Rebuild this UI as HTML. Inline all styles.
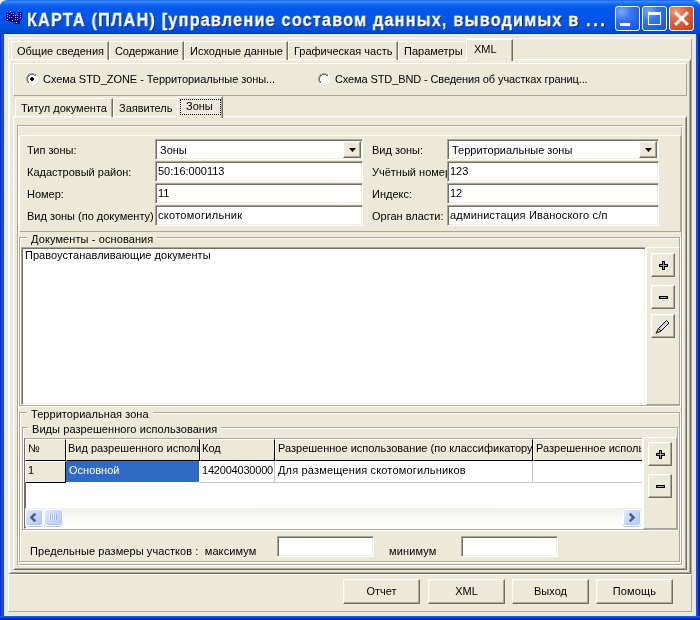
<!DOCTYPE html>
<html><head><meta charset="utf-8">
<style>
*{margin:0;padding:0;box-sizing:border-box}
html,body{width:700px;height:620px;overflow:hidden;background:#eef0f8}
body{position:relative;font-family:"Liberation Sans",sans-serif;font-size:11px;color:#000}
.a{position:absolute}
.t{position:absolute;will-change:transform;white-space:nowrap;line-height:13px;font-size:11px}
.win{position:absolute;left:0;top:0;width:700px;height:620px;border-radius:7px 7px 0 0;overflow:hidden;
 background:linear-gradient(to right,#0019cf 0,#0831d9 1px,#166aee 2px,#1444b8 3px,#1444b8 4px,transparent 4px,transparent 696px,#1444b8 696px,#166aee 697px,#0831d9 698px,#0019cf 699px)}
.title{position:absolute;left:0;top:0;width:700px;height:34px;border-radius:7px 7px 0 0;
 background:linear-gradient(to bottom,#0a4fd8 0,#3d8fff 1px,#2f80fb 2px,#0f64ef 5px,#0058ea 9px,#0055e5 22px,#0050dc 29px,#0046cc 32px,#0040c0 34px)}
.client{position:absolute;left:4px;top:34px;width:692px;height:582px;background:#ece9d8;border-left:1px solid #dfe9fb;border-right:1px solid #dfe9fb}
.bottomframe{position:absolute;left:0;top:616px;width:700px;height:4px;background:linear-gradient(to bottom,#1444b8 0,#166aee 1px,#0831d9 2px,#0019cf 3px)}
.ttl{position:absolute;will-change:transform;left:26.5px;top:7.9px;font-weight:bold;font-size:18px;line-height:24px;color:#fff;letter-spacing:1.35px;transform:scaleX(0.9);transform-origin:0 0;-webkit-text-stroke:0.3px #fff;text-shadow:1px 1px 0 #0a1883;white-space:nowrap}
.tb{position:absolute;top:6px;width:25px;height:25px;border:1px solid #fff;border-radius:3px}
.tbb{background:radial-gradient(circle at 25% 20%,#7aa7ff 0,#3b77f5 35%,#1e5de8 75%,#1a4fd6 100%)}
.tbr{background:radial-gradient(circle at 25% 20%,#f29a7a 0,#e0603a 40%,#d14a22 80%,#c23f1a 100%)}
/* bevels */
.raised{border-top:1px solid #fff;border-left:1px solid #fff;border-right:1px solid #aca899;border-bottom:1px solid #aca899}
.lowered{border-top:1px solid #aca899;border-left:1px solid #aca899;border-right:1px solid #fff;border-bottom:1px solid #fff}
.etched{border-top:1px solid #aca899;border-left:1px solid #aca899;border-right:1px solid #fff;border-bottom:1px solid #fff;box-shadow:inset 1px 1px 0 #fff,inset -1px -1px 0 #aca899}
.sheet{border-top:1px solid #fff;border-left:1px solid #fff;border-right:1px solid #716f64;border-bottom:1px solid #716f64;box-shadow:inset 1px 1px 0 #f1efe2,inset -1px -1px 0 #aca899}
.edit{position:absolute;background:#fff;border-top:1px solid #aca899;border-left:1px solid #aca899;border-right:1px solid #fff;border-bottom:1px solid #fff;box-shadow:inset 1px 1px 0 #716f64,inset -1px -1px 0 #f1efe2}
.btn{position:absolute;background:#ece9d8;border-top:1px solid #fff;border-left:1px solid #fff;border-right:1px solid #716f64;border-bottom:1px solid #716f64;box-shadow:inset -1px -1px 0 #aca899,inset 1px 1px 0 #f1efe2}
.tab{position:absolute;height:19px;border-top:1px solid #fff;border-left:1px solid #fff;border-right:1px solid #716f64;box-shadow:inset -1px 0 0 #aca899}
.gb{position:absolute;border:1px solid #aca899;box-shadow:inset 1px 1px 0 #fff,1px 1px 0 #fff}
.gbt{position:absolute;will-change:transform;background:#ece9d8;padding:0 4px;white-space:nowrap;line-height:13px}
.sbb{position:absolute;height:17px;border:1px solid #fdfdff;border-radius:3px;background:linear-gradient(135deg,#e1e9fd 0%,#cbd9fc 45%,#b7cbf8 100%);box-shadow:inset -1px -1px 0 #b0c4f0,0 1px 0 #b9c4dc}
.hdr{position:absolute;top:439px;height:22px;background:#ece9d8;border-top:1px solid #fff;border-left:1px solid #fff;border-right:1px solid #000;border-bottom:1px solid #000}
</style></head><body>
<div class="win"></div>
<div class="title"></div>
<div class="client"></div>
<div class="bottomframe"></div>

<!-- title bar -->
<svg class="a" style="left:4px;top:9px" width="22" height="18" viewBox="0 0 22 18" shape-rendering="crispEdges">
 <g fill="#0c0c8c">
 <rect x="2" y="4" width="4" height="8"/><rect x="6" y="3" width="5" height="10"/><rect x="11" y="6" width="5" height="9"/><rect x="14" y="3" width="4" height="8"/>
 </g>
 <g fill="#b8a8ff">
 <rect x="3" y="5" width="1" height="1"/><rect x="3" y="7" width="1" height="1"/><rect x="5" y="6" width="1" height="1"/><rect x="5" y="8" width="1" height="1"/>
 <rect x="7" y="4" width="1" height="1"/><rect x="9" y="4" width="1" height="1"/><rect x="7" y="8" width="1" height="1"/><rect x="9" y="6" width="1" height="1"/>
 <rect x="13" y="6" width="1" height="1"/><rect x="11" y="8" width="1" height="1"/><rect x="13" y="8" width="1" height="1"/><rect x="11" y="10" width="1" height="1"/><rect x="13" y="10" width="1" height="1"/>
 <rect x="16" y="4" width="1" height="1"/><rect x="16" y="6" width="1" height="1"/><rect x="16" y="8" width="1" height="1"/>
 </g>
 <g fill="#9ff0ff"><rect x="6" y="2" width="1" height="1"/><rect x="11" y="6" width="1" height="1"/></g>
 <g fill="#ffffff"><rect x="3" y="10" width="1" height="1"/><rect x="8" y="11" width="1" height="1"/><rect x="12" y="13" width="1" height="1"/></g>
</svg>
<div class="ttl">КАРТА (ПЛАН) [управление составом данных, выводимых в <span style="letter-spacing:2.9px;margin-left:1px">...</span></div>
<div class="tb tbb" style="left:615px"><div class="a" style="left:4px;top:16px;width:10px;height:3px;background:#fff"></div></div>
<div class="tb tbb" style="left:642px"><div class="a" style="left:5px;top:5px;width:13px;height:13px;border:1px solid #fff;border-top-width:3px"></div></div>
<div class="tb tbr" style="left:669px">
 <svg class="a" style="left:0;top:0" width="23" height="23" viewBox="0 0 23 23"><path d="M5.2 5.2 L17.8 17.8 M17.8 5.2 L5.2 17.8" stroke="#fff" stroke-width="3"/></svg>
</div>

<!-- outer page control -->
<div class="a raised" style="left:8px;top:38px;width:684px;height:536px"></div>
<div class="a sheet" style="left:9px;top:59px;width:682px;height:515px"></div>
<!-- top tabs -->
<div class="tab" style="left:11px;top:41px;width:98px"></div>
<div class="tab" style="left:109px;top:41px;width:75px"></div>
<div class="tab" style="left:184px;top:41px;width:104px"></div>
<div class="tab" style="left:288px;top:41px;width:110px"></div>
<div class="tab" style="left:398px;top:41px;width:70px"></div>
<div class="a" style="left:466px;top:39px;width:47px;height:22px;background:#ece9d8;border-top:1px solid #fff;border-left:1px solid #fff;border-right:1px solid #716f64;box-shadow:inset -1px 0 0 #aca899"></div>
<div class="t" style="left:17px;top:45px">Общие сведения</div>
<div class="t" style="left:115px;top:45px;letter-spacing:-0.08px">Содержание</div>
<div class="t" style="left:190px;top:45px">Исходные данные</div>
<div class="t" style="left:294px;top:45px">Графическая часть</div>
<div class="t" style="left:404px;top:45px">Параметры</div>
<div class="t" style="left:474px;top:43px">XML</div>

<!-- radio panel -->
<div class="a raised" style="left:13px;top:63px;width:674px;height:33px"></div>
<svg class="a" style="left:26px;top:73px" width="12" height="12" viewBox="0 0 12 12" shape-rendering="crispEdges"><path d="M4 0h4v1h-4zM2 1h2v1h-2zM8 1h2v1h-2zM1 2h1v1h-1zM1 3h1v1h-1zM0 4h1v1h-1zM0 5h1v1h-1zM0 6h1v1h-1zM0 7h1v1h-1zM1 8h1v1h-1zM1 9h1v1h-1z" fill="#aca899"/><path d="M4 1h4v1h-4zM2 2h2v1h-2zM8 2h2v1h-2zM2 3h1v1h-1zM1 4h1v1h-1zM1 5h1v1h-1zM1 6h1v1h-1zM1 7h1v1h-1zM2 8h1v1h-1zM2 9h1v1h-1z" fill="#716f64"/><path d="M4 2h4v1h-4zM10 2h1v1h-1zM3 3h6v1h-6zM10 3h1v1h-1zM2 4h3v1h-3zM7 4h3v1h-3zM11 4h1v1h-1zM2 5h2v1h-2zM8 5h2v1h-2zM11 5h1v1h-1zM2 6h2v1h-2zM8 6h2v1h-2zM11 6h1v1h-1zM2 7h3v1h-3zM7 7h3v1h-3zM11 7h1v1h-1zM3 8h6v1h-6zM10 8h1v1h-1zM4 9h4v1h-4zM10 9h1v1h-1zM2 10h2v1h-2zM8 10h2v1h-2zM4 11h4v1h-4z" fill="#ffffff"/><path d="M9 3h1v1h-1zM10 4h1v1h-1zM10 5h1v1h-1zM10 6h1v1h-1zM10 7h1v1h-1zM9 8h1v1h-1zM3 9h1v1h-1zM8 9h2v1h-2zM4 10h4v1h-4z" fill="#f1efe2"/><path d="M5 4h2v1h-2zM4 5h4v1h-4zM4 6h4v1h-4zM5 7h2v1h-2z" fill="#000000"/></svg>
<div class="t" style="left:43px;top:73px;letter-spacing:-0.05px">Схема STD_ZONE - Территориальные зоны...</div>
<svg class="a" style="left:318px;top:73px" width="12" height="12" viewBox="0 0 12 12" shape-rendering="crispEdges"><path d="M4 0h4v1h-4zM2 1h2v1h-2zM8 1h2v1h-2zM1 2h1v1h-1zM1 3h1v1h-1zM0 4h1v1h-1zM0 5h1v1h-1zM0 6h1v1h-1zM0 7h1v1h-1zM1 8h1v1h-1zM1 9h1v1h-1z" fill="#aca899"/><path d="M4 1h4v1h-4zM2 2h2v1h-2zM8 2h2v1h-2zM2 3h1v1h-1zM1 4h1v1h-1zM1 5h1v1h-1zM1 6h1v1h-1zM1 7h1v1h-1zM2 8h1v1h-1zM2 9h1v1h-1z" fill="#716f64"/><path d="M4 2h4v1h-4zM10 2h1v1h-1zM3 3h6v1h-6zM10 3h1v1h-1zM2 4h8v1h-8zM11 4h1v1h-1zM2 5h8v1h-8zM11 5h1v1h-1zM2 6h8v1h-8zM11 6h1v1h-1zM2 7h8v1h-8zM11 7h1v1h-1zM3 8h6v1h-6zM10 8h1v1h-1zM4 9h4v1h-4zM10 9h1v1h-1zM2 10h2v1h-2zM8 10h2v1h-2zM4 11h4v1h-4z" fill="#ffffff"/><path d="M9 3h1v1h-1zM10 4h1v1h-1zM10 5h1v1h-1zM10 6h1v1h-1zM10 7h1v1h-1zM9 8h1v1h-1zM3 9h1v1h-1zM8 9h2v1h-2zM4 10h4v1h-4z" fill="#f1efe2"/></svg>
<div class="t" style="left:335px;top:73px;letter-spacing:-0.11px">Схема STD_BND - Сведения об участках границ...</div>

<!-- inner page control -->
<div class="a sheet" style="left:13px;top:116px;width:674px;height:454px"></div>
<div class="tab" style="left:15px;top:98px;width:98px"></div>
<div class="tab" style="left:113px;top:98px;width:66px"></div>
<div class="a" style="left:177px;top:96px;width:46px;height:22px;background:#ece9d8;border-top:1px solid #fff;border-left:1px solid #fff;border-right:1px solid #716f64;box-shadow:inset -1px 0 0 #aca899"></div>
<div class="a" style="left:180px;top:99px;width:41px;height:16px;border:1px dotted #000"></div>
<div class="t" style="left:21px;top:102px">Титул документа</div>
<div class="t" style="left:119px;top:102px">Заявитель</div>
<div class="t" style="left:186px;top:100px">Зоны</div>

<!-- fields panel -->
<div class="a etched" style="left:17px;top:125px;width:666px;height:441px"></div>
<div class="a raised" style="left:19px;top:135px;width:662px;height:97px"></div>
<div class="t" style="left:27px;top:144px">Тип зоны:</div>
<div class="t" style="left:27px;top:166px">Кадастровый район:</div>
<div class="t" style="left:27px;top:188px">Номер:</div>
<div class="t" style="left:27px;top:210px">Вид зоны (по документу)</div>
<div class="edit" style="left:155px;top:139px;width:208px;height:21px"></div>
<div class="btn" style="left:343px;top:141px;width:18px;height:17px"><svg class="a" style="left:5px;top:6px" width="7" height="4"><path d="M0 0H7L3.5 4Z" fill="#000"/></svg></div>
<div class="t" style="left:160px;top:144px">Зоны</div>
<div class="edit" style="left:155px;top:161px;width:208px;height:21px"></div>
<div class="t" style="left:158px;top:165px">50:16:000113</div>
<div class="edit" style="left:155px;top:183px;width:208px;height:21px"></div>
<div class="t" style="left:158px;top:187px">11</div>
<div class="edit" style="left:155px;top:205px;width:208px;height:21px"></div>
<div class="t" style="left:158px;top:209px;letter-spacing:0.28px">скотомогильник</div>

<div class="t" style="left:372px;top:144px">Вид зоны:</div>
<div class="t" style="left:372px;top:166px">Учётный номер</div>
<div class="t" style="left:372px;top:188px">Индекс:</div>
<div class="t" style="left:372px;top:210px">Орган власти:</div>
<div class="edit" style="left:447px;top:139px;width:212px;height:21px"></div>
<div class="btn" style="left:639px;top:141px;width:18px;height:17px"><svg class="a" style="left:5px;top:6px" width="7" height="4"><path d="M0 0H7L3.5 4Z" fill="#000"/></svg></div>
<div class="t" style="left:452px;top:144px">Территориальные зоны</div>
<div class="edit" style="left:447px;top:161px;width:212px;height:21px"></div>
<div class="t" style="left:450px;top:165px">123</div>
<div class="edit" style="left:447px;top:183px;width:212px;height:21px"></div>
<div class="t" style="left:450px;top:187px">12</div>
<div class="edit" style="left:447px;top:205px;width:212px;height:21px"></div>
<div class="t" style="left:450px;top:209px;letter-spacing:0.19px">администация Иваноского с/п</div>

<!-- documents group -->
<div class="gb" style="left:19px;top:237px;width:661px;height:169px"></div>
<div class="gbt" style="left:27px;top:233px;letter-spacing:0.1px">Документы - основания</div>
<div class="edit" style="left:21px;top:247px;width:625px;height:158px"></div>
<div class="t" style="left:25px;top:249px;letter-spacing:0.05px">Правоустанавливающие документы</div>
<div class="a raised" style="left:646px;top:247px;width:34px;height:158px"></div>
<div class="btn" style="left:651px;top:253px;width:24px;height:24px">
 <svg class="a" style="left:7px;top:7px" width="9" height="9" viewBox="0 0 9 9" shape-rendering="crispEdges"><path d="M0 3H9V6H0ZM3 0H6V9H3Z" fill="#000"/><path d="M1 4H8V5H1ZM4 1H5V8H4Z" fill="#9a9a9a"/></svg>
</div>
<div class="btn" style="left:651px;top:285px;width:24px;height:24px">
 <svg class="a" style="left:7px;top:10px" width="9" height="3" viewBox="0 0 9 3" shape-rendering="crispEdges"><rect x="0" y="0" width="9" height="3" fill="#000"/><rect x="1" y="1" width="7" height="1" fill="#9a9a9a"/></svg>
</div>
<div class="btn" style="left:651px;top:314px;width:24px;height:24px">
 <svg class="a" style="left:-1px;top:-1px" width="24" height="24" viewBox="0 0 24 24"><path d="M15.5 6.5L18 9L10 17L7.5 14.5Z" fill="#d0d0f0" stroke="#000" stroke-width="1"/><path d="M7.5 14.5L10 17L7 18.5L6 17.5Z" fill="#e8f040" stroke="#000" stroke-width="1"/><path d="M6.5 17.5L5 19.5" stroke="#000" stroke-width="1.2"/></svg>
</div>

<!-- territorial zone group -->
<div class="gb" style="left:19px;top:412px;width:661px;height:150px"></div>
<div class="gbt" style="left:27px;top:408px;letter-spacing:0.05px">Территориальная зона</div>
<div class="gb" style="left:22px;top:427px;width:656px;height:103px"></div>
<div class="gbt" style="left:28px;top:423px;letter-spacing:0.07px">Виды разрешенного использования</div>

<!-- grid -->
<div class="a" style="left:24px;top:438px;width:619px;height:91px;background:#fff;border-top:1px solid #aca899;border-left:1px solid #716f64;border-right:1px solid #fff;border-bottom:1px solid #fff;box-shadow:inset 1px 0 0 #716f64"></div>
<div class="hdr" style="left:25px;width:41px"></div>
<div class="hdr" style="left:66px;width:134px"></div>
<div class="hdr" style="left:200px;width:75px"></div>
<div class="hdr" style="left:275px;width:258px"></div>
<div class="hdr" style="left:533px;width:109px;border-right:none"></div>
<div class="t" style="left:28px;top:442px">№</div>
<div class="a" style="left:67px;top:440px;width:132px;height:19px;overflow:hidden"><div class="t" style="left:1px;top:2px">Вид разрешенного использования</div></div>
<div class="t" style="left:202px;top:442px">Код</div>
<div class="a" style="left:276px;top:440px;width:256px;height:19px;overflow:hidden"><div class="t" style="left:2px;top:2px">Разрешенное использование (по классификатору)</div></div>
<div class="a" style="left:534px;top:440px;width:107px;height:19px;overflow:hidden"><div class="t" style="left:2px;top:2px">Разрешенное использование</div></div>
<!-- row1 -->
<div class="a" style="left:25px;top:461px;width:41px;height:22px;background:#ece9d8;border-top:1px solid #fff;border-left:1px solid #fff;border-right:1px solid #000;border-bottom:1px solid #000"></div>
<div class="t" style="left:28px;top:464px">1</div>
<div class="a" style="left:66px;top:461px;width:133px;height:21px;background:#316ac5"></div>
<div class="t" style="left:69px;top:464px;color:#fff">Основной</div>
<div class="a" style="left:199px;top:461px;width:443px;height:22px;border-bottom:1px solid #c8c8c8"></div>
<div class="a" style="left:274px;top:461px;width:1px;height:21px;background:#c8c8c8"></div>
<div class="a" style="left:532px;top:461px;width:1px;height:21px;background:#c8c8c8"></div>
<div class="a" style="left:200px;top:461px;width:74px;height:21px;overflow:hidden"><div class="t" style="left:2px;top:3px;letter-spacing:-0.2px">142004030000</div></div>
<div class="t" style="left:278px;top:464px;letter-spacing:0.17px">Для размещения скотомогильников</div>
<!-- scrollbar -->
<div class="a" style="left:25px;top:508px;width:617px;height:19px;background:linear-gradient(to bottom,#f0eee6,#fcfcf8 60%,#fefefb)"></div>
<div class="sbb" style="left:25px;top:509px;width:18px"><svg class="a" style="left:-1px;top:-1px" width="18" height="18" viewBox="0 0 18 18"><path d="M10.3 4.6 L6.4 8.5 L10.3 12.4" fill="none" stroke="#4d6185" stroke-width="2.6"/></svg></div>
<div class="sbb" style="left:44px;top:509px;width:19px"><svg class="a" style="left:-1px;top:-1px" width="19" height="18" viewBox="0 0 19 18" shape-rendering="crispEdges"><path d="M5.5 5V11M7.5 5V11M9.5 5V11M11.5 5V11" stroke="#eef4ff" stroke-width="1"/><path d="M6.5 5V11M8.5 5V11M10.5 5V11M12.5 5V11" stroke="#9fb6e8" stroke-width="1"/></svg></div>
<div class="sbb" style="left:623px;top:509px;width:18px"><svg class="a" style="left:-1px;top:-1px" width="18" height="18" viewBox="0 0 18 18"><path d="M6.7 4.6 L10.6 8.5 L6.7 12.4" fill="none" stroke="#4d6185" stroke-width="2.6"/></svg></div>
<!-- side buttons grid -->
<div class="a raised" style="left:643px;top:437px;width:34px;height:92px"></div>
<div class="btn" style="left:648px;top:442px;width:24px;height:24px">
 <svg class="a" style="left:7px;top:7px" width="9" height="9" viewBox="0 0 9 9" shape-rendering="crispEdges"><path d="M0 3H9V6H0ZM3 0H6V9H3Z" fill="#000"/><path d="M1 4H8V5H1ZM4 1H5V8H4Z" fill="#9a9a9a"/></svg>
</div>
<div class="btn" style="left:648px;top:474px;width:24px;height:24px">
 <svg class="a" style="left:7px;top:10px" width="9" height="3" viewBox="0 0 9 3" shape-rendering="crispEdges"><rect x="0" y="0" width="9" height="3" fill="#000"/><rect x="1" y="1" width="7" height="1" fill="#9a9a9a"/></svg>
</div>
<!-- limits row -->
<div class="t" style="left:30px;top:545px;white-space:pre;letter-spacing:0.08px">Предельные размеры участков :  максимум</div>
<div class="edit" style="left:277px;top:536px;width:97px;height:21px"></div>
<div class="t" style="left:389px;top:545px;letter-spacing:0.14px">минимум</div>
<div class="edit" style="left:461px;top:536px;width:97px;height:21px"></div>

<!-- bottom panel -->
<div class="a raised" style="left:8px;top:574px;width:684px;height:38px"></div>
<div class="btn" style="left:343px;top:579px;width:77px;height:25px"><div class="t" style="left:0;width:75px;top:5px;text-align:center">Отчет</div></div>
<div class="btn" style="left:428px;top:579px;width:77px;height:25px"><div class="t" style="left:0;width:75px;top:5px;text-align:center">XML</div></div>
<div class="btn" style="left:512px;top:579px;width:77px;height:25px"><div class="t" style="left:0;width:75px;top:5px;text-align:center">Выход</div></div>
<div class="btn" style="left:596px;top:579px;width:77px;height:25px"><div class="t" style="left:0;width:75px;top:5px;text-align:center;letter-spacing:0.15px">Помощь</div></div>
</body></html>
